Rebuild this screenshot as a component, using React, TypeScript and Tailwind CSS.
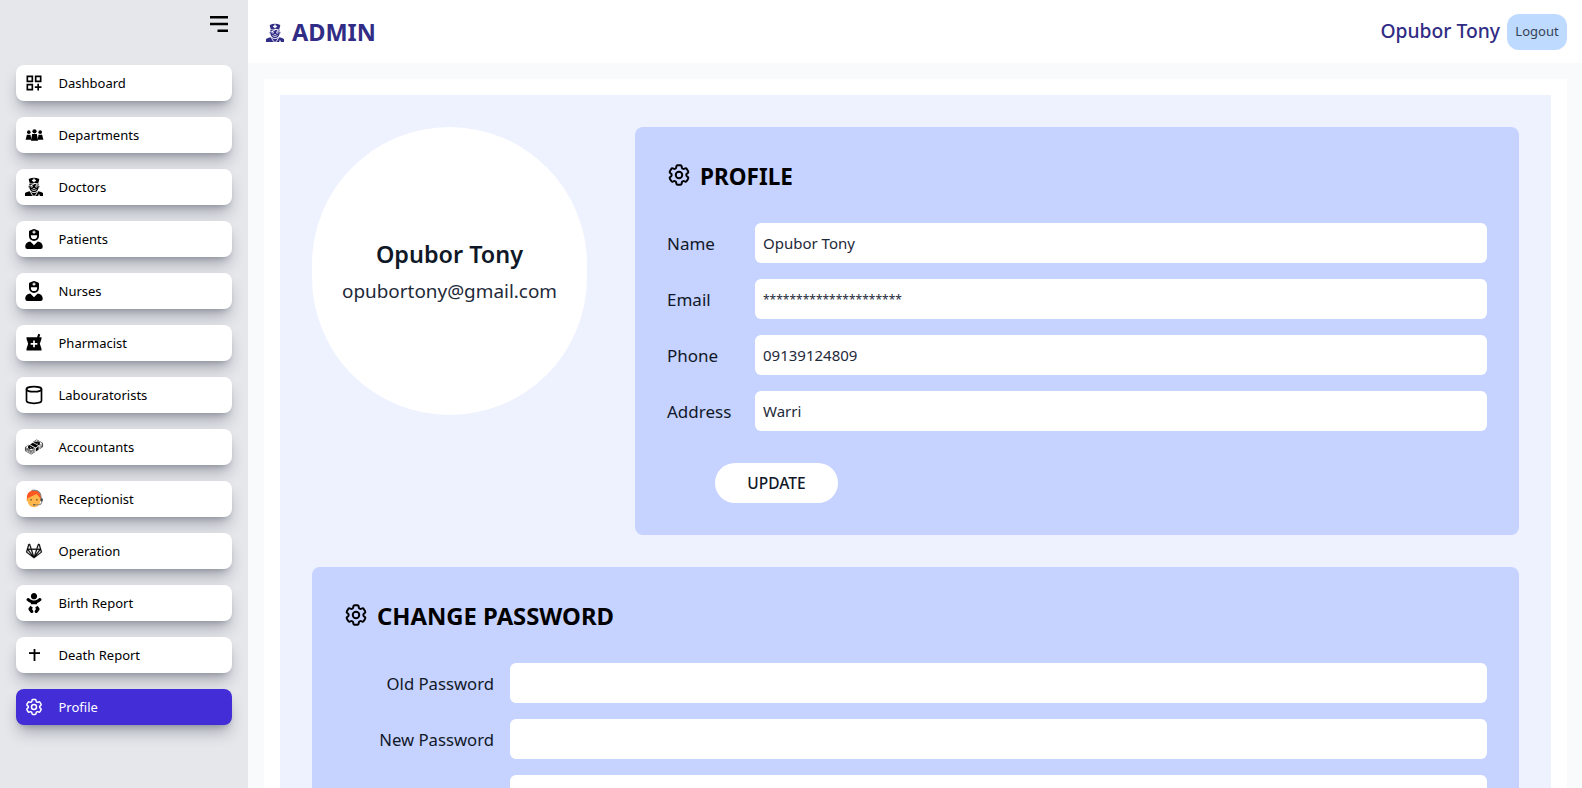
import React from "react";
import { FaUserNurse, FaBaby } from "react-icons/fa";
import { GiNurseMale, GiMoneyStack } from "react-icons/gi";
import { MdOutlineDashboardCustomize, MdLocalPharmacy } from "react-icons/md";
import { HiOutlineCog6Tooth } from "react-icons/hi2";
import { AiOutlineGitlab } from "react-icons/ai";
import { FcAssistant } from "react-icons/fc";
import { LuCylinder } from "react-icons/lu";

const DepartmentsIcon = () => (
  <svg width="19" height="12" viewBox="0 0 18 11" fill="currentColor">
    <circle cx="3.6" cy="2.8" r="1.7" />
    <path d="M0.6 10 L1.8 5.2 H5.2 L6 10 Z" />
    <circle cx="14.4" cy="2.8" r="1.7" />
    <path d="M12 10 L12.8 5.2 H16.2 L17.4 10 Z" />
    <circle cx="9" cy="2" r="2" />
    <path d="M5.6 11 L6.8 4.6 H11.2 L12.4 11 Z" />
  </svg>
);

const DeathIcon = () => (
  <svg width="11" height="12" viewBox="0 0 11 12" fill="currentColor">
    <rect x="4.6" y="0" width="1.8" height="12" />
    <rect x="0" y="3.2" width="11" height="1.8" />
  </svg>
);

const MenuIcon = () => (
  <svg width="18" height="16" viewBox="0 0 18 16" stroke="currentColor" strokeWidth="2.6">
    <path d="M0 1.3 H18 M0 8 H18 M7.5 14.7 H18" />
  </svg>
);

const navItems = [
  { label: "Dashboard", icon: <MdOutlineDashboardCustomize size={20} /> },
  { label: "Departments", icon: <DepartmentsIcon /> },
  { label: "Doctors", icon: <GiNurseMale size={20} /> },
  { label: "Patients", icon: <FaUserNurse size={20} /> },
  { label: "Nurses", icon: <FaUserNurse size={20} /> },
  { label: "Pharmacist", icon: <MdLocalPharmacy size={20} /> },
  { label: "Labouratorists", icon: <LuCylinder size={20} /> },
  { label: "Accountants", icon: <GiMoneyStack size={20} /> },
  { label: "Receptionist", icon: <FcAssistant size={20} /> },
  { label: "Operation", icon: <AiOutlineGitlab size={20} stroke="currentColor" strokeWidth={15} /> },
  { label: "Birth Report", icon: <FaBaby size={20} /> },
  { label: "Death Report", icon: <DeathIcon /> },
  { label: "Profile", icon: <HiOutlineCog6Tooth size={20} strokeWidth={1.8} />, active: true },
];

const profileFields = [
  { label: "Name", value: "Opubor Tony", size: "text-[15px]" },
  { label: "Email", value: "*********************", size: "text-[12px]" },
  { label: "Phone", value: "09139124809", size: "text-[15px]" },
  { label: "Address", value: "Warri", size: "text-[15px]" },
];

const passwordFields = ["Old Password", "New Password", ""];

const Sidebar = () => (
  <aside className="w-[248px] shrink-0 bg-gray-200 px-4">
    <div className="flex h-[65px] justify-end pt-[16px] pr-[4px] text-black">
      <MenuIcon />
    </div>
    <nav className="flex flex-col gap-4">
      {navItems.map((item) => (
        <div
          key={item.label}
          className={`flex h-9 items-center rounded-lg pl-[8px] text-[13px] shadow-[0_10px_15px_-3px_rgba(15,23,42,0.3),0_4px_6px_-4px_rgba(15,23,42,0.3)] ${
            item.active ? "bg-indigo-700 text-white" : "bg-white text-black"
          }`}
        >
          <span className="flex w-[20px] justify-center">{item.icon}</span>
          <span className="ml-[14.5px] pt-[2px]">{item.label}</span>
        </div>
      ))}
    </nav>
  </aside>
);

const Header = () => (
  <header className="flex h-[63px] shrink-0 items-center justify-between bg-white pr-[15px] pl-[17px]">
    <div className="flex items-center gap-[7px] pt-[2px] text-indigo-900">
      <GiNurseMale size={20} />
      <span className="text-[23.5px] font-bold">ADMIN</span>
    </div>
    <div className="flex items-center gap-[7px]">
      <span className="text-[19.3px] font-medium text-indigo-900">Opubor Tony</span>
      <button className="h-9 w-[60px] rounded-xl bg-blue-200 text-[13px] text-gray-700">Logout</button>
    </div>
  </header>
);

const SectionTitle = ({ title, size }: { title: string; size: string }) => (
  <div className="flex h-8 items-center gap-[8px]">
    <HiOutlineCog6Tooth size={26} strokeWidth={1.8} className="-ml-[1px] text-black" />
    <h2 className={`pt-[4px] font-bold text-black ${size}`}>{title}</h2>
  </div>
);

const App = () => {
  return (
    <div className="flex h-screen overflow-hidden font-['Noto_Sans',sans-serif]">
      <Sidebar />
      <div className="flex min-w-0 flex-1 flex-col">
        <Header />
        <main className="flex-1 overflow-hidden bg-gray-50 py-4 pr-[15px] pl-4">
          <div className="bg-white p-4">
            <div className="bg-indigo-50 p-8">
              <div className="flex gap-12">
                <div className="flex h-[288px] w-[275px] shrink-0 flex-col items-center justify-center rounded-full bg-white">
                  <p className="text-[23.4px] font-semibold text-gray-900">Opubor Tony</p>
                  <p className="mt-[5px] text-[18.9px] text-gray-800">opubortony@gmail.com</p>
                </div>

                {/* Profile */}
                <section className="flex-1 rounded-lg bg-indigo-200 p-8">
                  <SectionTitle title="PROFILE" size="text-[22.5px]" />
                  <div className="mt-8 flex flex-col gap-4">
                    {profileFields.map((f) => (
                      <div key={f.label} className="flex items-center">
                        <label className="w-[88px] shrink-0 pt-[2px] text-[17px] text-gray-900">{f.label}</label>
                        <input
                          readOnly
                          defaultValue={f.value}
                          className={`h-10 w-full rounded-md bg-white px-2 text-gray-800 outline-none ${f.size}`}
                        />
                      </div>
                    ))}
                  </div>
                  <button className="mt-8 ml-12 h-10 w-[123px] rounded-full bg-white pt-[2px] text-[15.5px] font-medium text-gray-900">
                    UPDATE
                  </button>
                </section>
              </div>

              {/* Change password */}
              <section className="mt-8 rounded-lg bg-indigo-200 p-8">
                <SectionTitle title="CHANGE PASSWORD" size="text-[23.8px]" />
                <div className="mt-8 flex flex-col gap-4">
                  {passwordFields.map((label, i) => (
                    <div key={i} className="flex items-center">
                      <label className="mr-4 w-[150px] shrink-0 pt-[2px] text-right text-[16.7px] text-gray-900">{label}</label>
                      <input type="password" className="h-10 w-full rounded-md bg-white px-2 outline-none" />
                    </div>
                  ))}
                </div>
              </section>
            </div>
          </div>
        </main>
      </div>
    </div>
  );
};

export default App;
